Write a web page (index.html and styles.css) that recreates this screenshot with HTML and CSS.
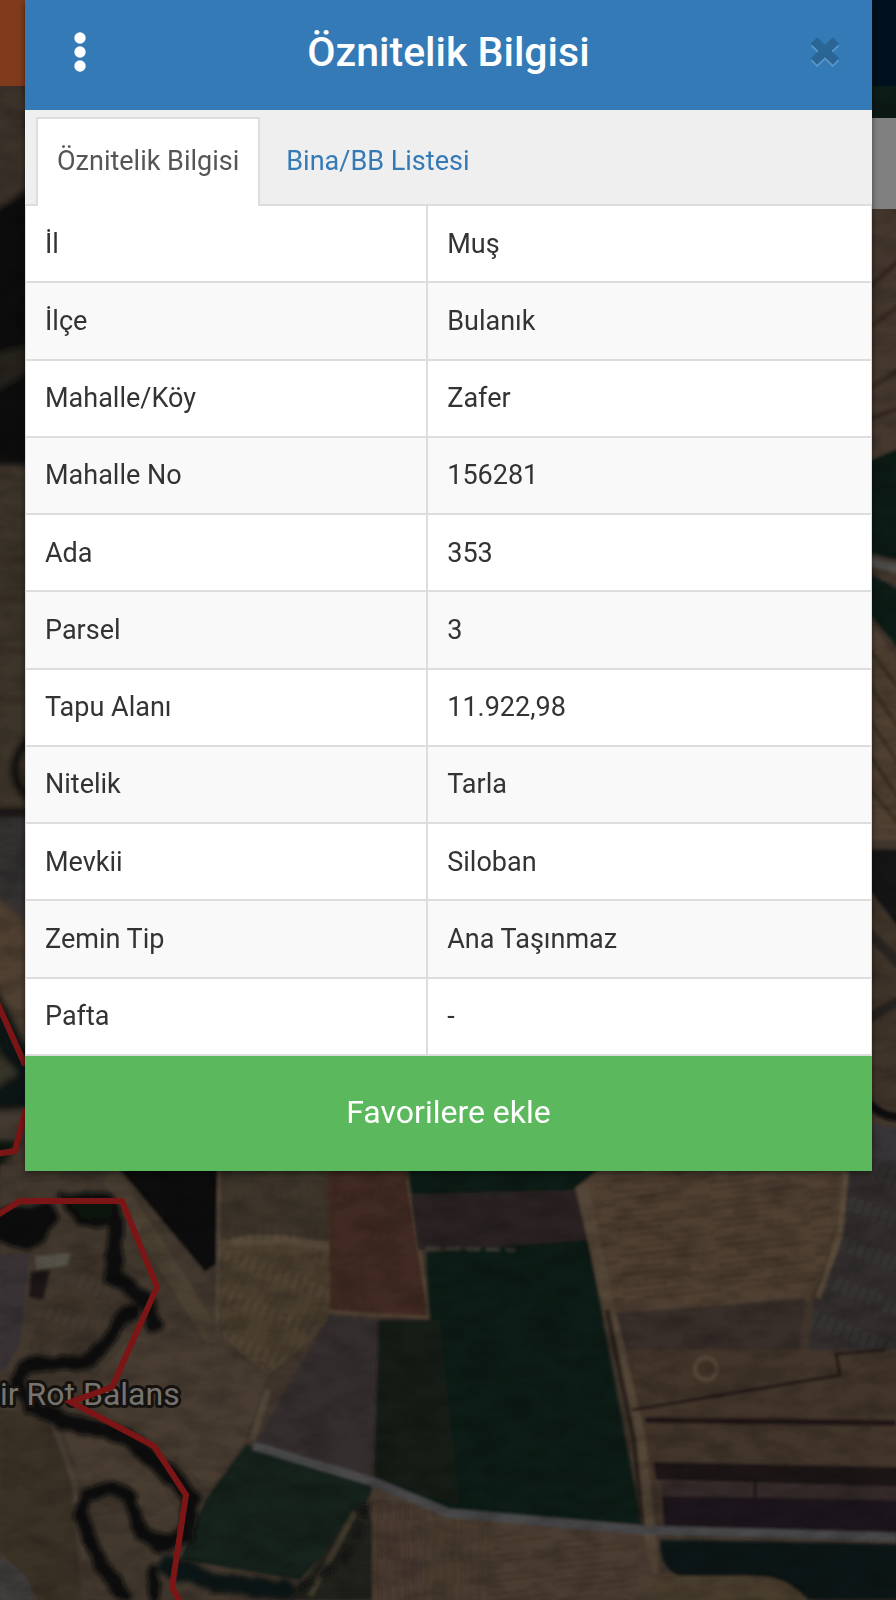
FILE: index.html
```
<!DOCTYPE html>
<html lang="tr">
<head>
    <meta charset="UTF-8">
    <meta name="viewport" content="width=device-width, initial-scale=1.0">
    <title>Öznitelik Bilgisi</title>
    <link rel="stylesheet" href="styles.css">
</head>
<body>
    <div class="page">
        <svg class="map" viewBox="0 0 896 1600" preserveAspectRatio="xMidYMin slice" aria-hidden="true">
            <defs>
                <filter id="soft" x="-5%" y="-5%" width="110%" height="110%"><feGaussianBlur stdDeviation="1.5"/></filter>
                <filter id="softer" x="-10%" y="-10%" width="120%" height="120%"><feGaussianBlur stdDeviation="3"/></filter>
                <filter id="rough" x="-10%" y="-10%" width="120%" height="120%">
                    <feTurbulence type="fractalNoise" baseFrequency="0.06" numOctaves="2" seed="7" result="n"/>
                    <feDisplacementMap in="SourceGraphic" in2="n" scale="9" xChannelSelector="R" yChannelSelector="G"/>
                    <feGaussianBlur stdDeviation="2"/>
                </filter>
                <filter id="grain" x="0" y="0" width="100%" height="100%" color-interpolation-filters="sRGB">
                    <feTurbulence type="fractalNoise" baseFrequency="0.03 0.06" numOctaves="4" seed="4"/>
                    <feColorMatrix values="0 0 0 0 0  0 0 0 0 0  0 0 0 0 0  1.6 0 0 0 -0.6"/>
                </filter>
                <pattern id="rows" width="9" height="40" patternUnits="userSpaceOnUse">
                    <path d="M2 0V40M6 0V25" stroke="#2c221b" stroke-width="2" opacity=".3"/>
                </pattern>
                <pattern id="rowsFlat" width="97" height="19" patternUnits="userSpaceOnUse" patternTransform="rotate(-6)">
                    <path d="M0 3H70M20 9H97M0 15H45" stroke="#2e231b" stroke-width="2" opacity=".4"/>
                </pattern>
                <pattern id="rowsSlant" width="9" height="40" patternUnits="userSpaceOnUse" patternTransform="rotate(22)">
                    <path d="M2 0V40M6 5V30" stroke="#2b2119" stroke-width="2" opacity=".35"/>
                </pattern>
            </defs>
            <rect width="896" height="1600" fill="#41362d"/>

            <!-- left strip -->
            <g filter="url(#softer)">
                <path d="M-10 80H30V190L-10 215Z" fill="#3b3229"/>
                <path d="M-10 212L30 188V465H-10Z" fill="#07110f"/>
                <path d="M-10 355L30 345V370L-10 395Z" fill="#26231e"/>
                <path d="M-10 470H30V810H-10Z" fill="#3e352b"/>
                <path d="M-10 560H30M-10 600H30M-10 650H30M-10 700H30" stroke="#302a22" stroke-width="6"/>
                <path d="M30 738Q8 760 18 785L30 800M-10 812H30" fill="none" stroke="#0b100f" stroke-width="9"/>
                <path d="M-10 818H30V925L-10 890Z" fill="#353031"/>
                <path d="M-10 895L30 930V1060L-10 985Z" fill="#4f4133"/>
                <path d="M-10 975L30 1050V1110H-10Z" fill="#111713"/>
                <path d="M-10 1040L18 1075L-10 1090Z" fill="#38342c"/>
                <path d="M-10 1110H30V1135H-10Z" fill="#453b31"/>
                <path d="M-10 1140H20L0 1170H-10Z" fill="#101411"/>
            </g>

            <!-- right strip -->
            <g filter="url(#soft)">
                <path d="M866 80H900V125H866Z" fill="#0b1a12"/>
                <path d="M866 205H900V445L866 465Z" fill="#45382e"/>
                <path d="M866 290L900 260M866 330L900 305M866 390L900 370M866 420L900 408" stroke="#372c24" stroke-width="6"/>
                <path d="M866 462L900 448V560L866 552Z" fill="#0c1d16"/>
                <path d="M866 561L900 569" stroke="#51504d" stroke-width="9"/>
                <path d="M866 572L900 590V650L866 610Z" fill="#0c1d16"/>
                <path d="M866 615L900 665V840H866Z" fill="#4f4131"/>
                <path d="M866 645L900 690M866 680L900 730M866 715L900 765M866 750L900 800M866 785L900 825" stroke="#3b3024" stroke-width="4"/>
                <path d="M866 850H900V940L866 890Z" fill="#171512"/>
                <path d="M866 885L900 930V1110H866Z" fill="#40342c"/>
                <path d="M866 930L900 965M866 1020L900 1000" stroke="#2c2520" stroke-width="10"/>
                <path d="M866 1100Q880 1117 900 1117" fill="none" stroke="#0c0908" stroke-width="9"/>
                <path d="M866 1122L900 1130V1180H866Z" fill="#383537"/>
            </g>

            <!-- fields, left half -->
            <g filter="url(#soft)">
                <path d="M0 1165H230V1600H0Z" fill="#43392e"/>
                <path d="M116 1165L145 1200L205 1272L219 1262V1165Z" fill="#090f10"/>
                <path d="M110 1175L215 1340" stroke="#4c4033" stroke-width="18"/>
                <path d="M219 1165H328L330 1250H219Z" fill="#41352c"/>
                <path d="M219 1240H332V1320L268 1376L215 1330Z" fill="#4f4233"/>
                <path d="M232 1242Q280 1235 330 1248" fill="none" stroke="#5a4d3c" stroke-width="9"/>
                <path d="M219 1165H330V1240H219Z" fill="url(#rows)"/>
                <path d="M219 1252H332V1320L268 1372L215 1330Z" fill="url(#rowsSlant)"/>
                <path d="M219 1165L217 1330" stroke="#55493d" stroke-width="3"/>
                <path d="M328 1165H406L430 1318L330 1310Z" fill="#432c22"/>
                <path d="M328 1165H406L430 1318L330 1310Z" fill="url(#rows)"/>
                <path d="M408 1180L430 1318L330 1312" fill="none" stroke="#554435" stroke-width="3"/>
                <path d="M130 1340Q190 1325 268 1375L245 1440L208 1490Q150 1420 75 1400Z" fill="#483c31"/>
                <path d="M330 1314L379 1320L374 1478L255 1443Z" fill="#352e2f"/>
                <path d="M268 1390L252 1440" stroke="#514639" stroke-width="7"/>
                <path d="M246 1444L374 1486L362 1512L300 1580L180 1560L205 1500Z" fill="#15241b"/>
                <path d="M372 1486L430 1507V1600H372Z" fill="#4b3e31"/>
                <path d="M362 1500L372 1520V1600H290Z" fill="#23211b"/>
                <path d="M355 1512L310 1596" stroke="#3c382b" stroke-width="6"/>
                <path d="M0 1254H30L20 1345L5 1370H0Z" fill="#373335"/>
                <path d="M0 1410L50 1415L70 1480L82 1600H40L0 1550Z" fill="#3b3028"/>
                <path d="M52 1422L74 1480L84 1560" fill="none" stroke="#4b4134" stroke-width="5"/>
                <path d="M60 1415Q120 1430 160 1480L180 1525L165 1535Q135 1520 130 1485L80 1480Z" fill="#483e33"/>
                <path d="M0 1558Q30 1570 33 1600H0Z" fill="#403e3e"/>
                <path d="M50 1300L100 1250L110 1300L70 1350H22Z" fill="url(#rowsSlant)"/>
            </g>

            <!-- stream and tree lines -->
            <g filter="url(#rough)" fill="none" stroke="#0d110e" stroke-linejoin="round" stroke-linecap="round">
                <path d="M0 1215L48 1205L55 1218L30 1245L0 1238Z" fill="#0d110e" stroke-width="9"/>
                <path d="M62 1196H110L122 1222H80Z" fill="#0e1310" stroke-width="7"/>
                <path d="M116 1220L113 1275L150 1305L154 1325" stroke-width="17"/>
                <path d="M134 1312Q118 1314 112 1336L88 1362L25 1366L16 1382L32 1406" stroke-width="14"/>
                <path d="M32 1404L62 1420L125 1436L165 1470L192 1500L186 1535L160 1546" stroke-width="17"/>
                <path d="M166 1543L142 1535L128 1495L112 1488L88 1494L80 1512L98 1560L125 1596" stroke-width="14"/>
                <path d="M168 1566L215 1582L285 1590" stroke="#0d1413" stroke-width="20"/>
                <path d="M300 1588L345 1560L365 1510" stroke="#141713" stroke-width="8" stroke-dasharray="12 14"/>
                <path d="M153 1570L155 1600" stroke-width="10"/>
            </g>
            <path d="M35 1256L71 1253L68 1265L36 1270Z" fill="#57524a" filter="url(#soft)"/>
            <path d="M31 1272L50 1270L43 1300L29 1297Z" fill="#1b1413" filter="url(#soft)"/>

            <!-- fields, right half -->
            <g filter="url(#soft)">
                <path d="M408 1165H600V1200H412Z" fill="#0e1a16"/>
                <path d="M411 1194L580 1190L590 1245L418 1250Z" fill="#292323"/>
                <path d="M379 1320H430L426 1252L588 1240L642 1525L448 1510L374 1478Z" fill="#0b1b13"/>
                <path d="M379 1320H440L460 1506L374 1478Z" fill="#131c17"/>
                <path d="M478 1260L505 1510M455 1260L470 1400M560 1260L615 1510" stroke="#0f1f16" stroke-width="6"/>
                <path d="M426 1248L515 1250" stroke="#3b3a35" stroke-width="3" stroke-dasharray="14 6"/>
                <path d="M575 1188L605 1165H848L840 1235L810 1300L606 1316Z" fill="#4f4031"/>
                <path d="M592 1170H840L825 1285L608 1305Z" fill="url(#rowsFlat)"/>
                <path d="M848 1165L900 1160V1350L808 1356L814 1300L840 1235Z" fill="#343031"/>
                <path d="M850 1165L900 1160V1350L808 1356L814 1300Z" fill="url(#rowsSlant)"/>
                <path d="M846 1172L840 1235L818 1298" fill="none" stroke="#5b4d3b" stroke-width="6"/>
                <path d="M606 1314L806 1298L798 1360L628 1352Z" fill="#382f2a"/>
                <path d="M614 1350L900 1350V1530H650Z" fill="#42362c"/>
                <circle cx="706" cy="1369" r="11" fill="none" stroke="#574837" stroke-width="4"/>
                <path d="M582 1185L610 1312L640 1440L656 1600" fill="none" stroke="#544637" stroke-width="12"/>
                <path d="M607 1310L634 1440L643 1530" fill="none" stroke="#2a211b" stroke-width="5"/>
                <path d="M632 1410L840 1375L836 1354L885 1350" fill="none" stroke="#211815" stroke-width="3"/>
                <path d="M645 1420L896 1423" stroke="#211817" stroke-width="6"/>
                <path d="M653 1462L900 1467V1487L656 1480Z" fill="#1e1718"/>
                <path d="M660 1482L900 1487V1500L662 1496Z" fill="#35292b"/>
                <path d="M662 1496L900 1500V1534L664 1528Z" fill="#1d171b"/>
                <path d="M755 1480V1500" stroke="#1b1519" stroke-width="3"/>
                <path d="M425 1512L640 1532L662 1600H425Z" fill="#4b3e31"/>
                <path d="M490 1530L640 1540V1600H490Z" fill="url(#rowsFlat)"/>
                <path d="M374 1500L490 1520V1600H374Z" fill="url(#rows)"/>
                <path d="M656 1572L780 1578L815 1600H650Z" fill="#4a3d2f"/>
                <path d="M660 1540L900 1544V1600H808Q785 1575 755 1576L680 1576Q660 1570 660 1540Z" fill="#0a1212"/>
                <path d="M253 1446L374 1482L448 1513L640 1530L896 1537" fill="none" stroke="#4a494c" stroke-width="9"/>
            </g>
            <rect width="896" height="1600" filter="url(#grain)" opacity=".25"/>

            <text class="map-label" x="0" y="1405">ir Rot Balans</text>

            <!-- parcel boundary -->
            <g class="parcel">
                <path d="M-4 1000L25 1065M26 1108L15 1151L-4 1154"/>
                <path d="M-4 1216L20 1201H122L157 1287L112 1387L71 1402L154 1446L186 1495L172 1587L182 1606"/>
            </g>
        </svg>

        <div class="topbar">
            <div class="topbar-brand"></div>
            <div class="topbar-menu"></div>
        </div>
        <div class="search"></div>
    </div>

    <div class="modal" role="dialog" aria-labelledby="modalTitle">
        <div class="modal-header">
            <button type="button" class="icon-btn" aria-label="Menü">
                <svg width="12" height="40" viewBox="0 0 12 40" fill="#fff">
                    <circle cx="6" cy="6" r="5.700"/>
                    <circle cx="6" cy="20" r="5.700"/>
                    <circle cx="6" cy="34" r="5.700"/>
                </svg>
            </button>
            <h1 class="modal-title" id="modalTitle">Öznitelik Bilgisi</h1>
            <button type="button" class="icon-btn close" aria-label="Kapat">
                <svg width="30" height="32" viewBox="0 0 30 32" fill="none" stroke-width="9">
                    <path d="M4 7L26 28M26 7L4 28" stroke="#5c96c8"/>
                    <path d="M4 4.500L26 25.500M26 4.500L4 25.500" stroke="#2a6596"/>
                </svg>
            </button>
        </div>

        <nav class="tabs">
            <a href="#bilgi" class="tab active">Öznitelik Bilgisi</a>
            <a href="#liste" class="tab">Bina/BB Listesi</a>
        </nav>

        <table class="info-table" id="bilgi">
            <tbody>
                <tr><th scope="row">İl</th><td>Muş</td></tr>
                <tr><th scope="row">İlçe</th><td>Bulanık</td></tr>
                <tr><th scope="row">Mahalle/Köy</th><td>Zafer</td></tr>
                <tr><th scope="row">Mahalle No</th><td>156281</td></tr>
                <tr><th scope="row">Ada</th><td>353</td></tr>
                <tr><th scope="row">Parsel</th><td>3</td></tr>
                <tr><th scope="row">Tapu Alanı</th><td>11.922,98</td></tr>
                <tr><th scope="row">Nitelik</th><td>Tarla</td></tr>
                <tr><th scope="row">Mevkii</th><td>Siloban</td></tr>
                <tr><th scope="row">Zemin Tip</th><td>Ana Taşınmaz</td></tr>
                <tr><th scope="row">Pafta</th><td>-</td></tr>
            </tbody>
        </table>

        <button type="button" class="favorite-btn">Favorilere ekle</button>
    </div>
</body>
</html>
```
FILE: styles.css
```
* {
    box-sizing: border-box;
}
body {
    margin: 0;
    min-height: 100vh;
    font-family: Roboto, "Liberation Sans", sans-serif;
    font-size: 27px;
    color: #333;
    background-color: #41362d;
}

/* page under the modal */
.page {
    position: fixed;
    inset: 0;
    z-index: -1;
    overflow: hidden;
}
.map {
    position: absolute;
    inset: 0;
    width: 100%;
    height: 100%;
}
.map-label {
    font-size: 32px;
    fill: #77746f;
    stroke: #15120f;
    stroke-width: 6px;
    stroke-linejoin: round;
    paint-order: stroke;
}
.parcel {
    fill: none;
    stroke: #7c1515;
    stroke-width: 6px;
}
.topbar {
    position: relative;
    display: flex;
    height: 86px;
}
.topbar-brand {
    flex: 1;
    background-color: #803a1c;
}
.topbar-menu {
    flex: 1;
    background-color: #00101e;
}
.search {
    position: relative;
    width: 50%;
    height: 91px;
    margin: 32px 0 0 auto;
    background-color: #808080;
}

/* modal */
.modal {
    margin: 0 24px 0 25px;
    background-color: #fff;
    box-shadow: 0 2px 6px rgba(0, 0, 0, 0.5);
}
.modal-header {
    display: flex;
    align-items: center;
    justify-content: space-between;
    height: 110px;
    padding: 0 32px 6px;
    background-color: #337ab7;
}
.modal-title {
    margin: 0;
    font-size: 41px;
    font-weight: 500;
    color: #fff;
}
.icon-btn {
    display: flex;
    justify-content: center;
    width: 46px;
    padding: 0;
    border: none;
    background: none;
    cursor: pointer;
}
.icon-btn.close {
    justify-content: flex-end;
}
.tabs {
    display: flex;
    gap: 5px;
    height: 96px;
    padding: 7px 11px 0;
    background-color: #efefef;
    border-bottom: 2px solid #ddd;
}
.tab {
    padding: 0 19px;
    border: 2px solid transparent;
    border-bottom: none;
    line-height: 84px;
    color: #337ab7;
    text-decoration: none;
}
.tab.active {
    margin-bottom: -2px;
    color: #555;
    background-color: #fff;
    border-color: #ddd;
}
.info-table {
    width: 100%;
    height: 850px;
    table-layout: fixed;
    border-collapse: separate;
    border-spacing: 0;
    border: solid #ddd;
    border-width: 0 1px;
}
.info-table th,
.info-table td {
    padding: 0 19px;
    border-bottom: 2px solid #ddd;
    font-weight: 400;
    text-align: left;
}
.info-table th {
    width: 47.6%;
    border-right: 2px solid #ddd;
}
.info-table tr:nth-child(even) {
    background-color: #f9f9f9;
}
.favorite-btn {
    display: block;
    width: 100%;
    height: 115px;
    padding: 0 0 3px;
    border: none;
    font-family: inherit;
    font-size: 32px;
    color: #fff;
    background-color: #5cb85c;
    cursor: pointer;
}
```
